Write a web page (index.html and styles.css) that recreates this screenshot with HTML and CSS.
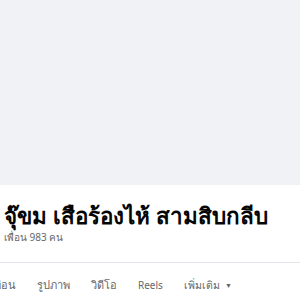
FILE: index.html
```html
<!DOCTYPE html>
<html lang="th">
<head>
    <meta charset="UTF-8">
    <meta name="viewport" content="width=device-width, initial-scale=1.0">
    <title>จุ๊ขม เสือร้องไห้ สามสิบกลีบ</title>
    <link rel="stylesheet" href="styles.css">
</head>
<body>

    <div class="cover"></div>

    <div class="profile">
        <div class="profile-info">
            <h1 class="profile-name">จุ๊ขม เสือร้องไห้ สามสิบกลีบ</h1>
            <div class="friend-count">เพื่อน 983 คน</div>
        </div>

        <nav class="tabs">
            <a class="tab" href="#">เพื่อน</a>
            <a class="tab" href="#">รูปภาพ</a>
            <a class="tab" href="#">วิดีโอ</a>
            <a class="tab tab-latin" href="#">Reels</a>
            <a class="tab tab-more" href="#">เพิ่มเติม<span class="caret">&#9660;</span></a>
        </nav>
    </div>

</body>
</html>
```

FILE: styles.css
```css
:root {
    --page-bg: #f0f2f5;
    --card-bg: #ffffff;
    --text-color: #050505;
    --muted-color: #65676b;
    --divider-color: #e4e6eb;
}

body {
    margin: 0;
    font-family: "Noto Sans", "Liberation Sans", sans-serif;
    background: var(--card-bg);
    overflow: hidden;
}

/* Cover area */
.cover {
    height: 185px;
    background: var(--page-bg);
}

/* Name and friends */
.profile-info {
    padding: 17px 4px 18px;
    border-bottom: 1px solid var(--divider-color);
}

.profile-name {
    margin: 0;
    color: var(--text-color);
    font-size: 22.4px;
    font-weight: 700;
    line-height: 28px;
    white-space: nowrap;
}

.friend-count {
    color: var(--muted-color);
    font-size: 10px;
    line-height: 14px;
}

/* Tab row */
.tabs {
    display: flex;
    align-items: baseline;
    gap: 21px;
    margin-left: -10px;
    padding-top: 14px;
}

.tab {
    color: var(--muted-color);
    font-size: 11px;
    line-height: 16px;
    text-decoration: none;
    white-space: nowrap;
}

.tab-latin {
    font-size: 10px;
}

.tab-more {
    font-size: 10.5px;
}

.caret {
    font-size: 7px;
    vertical-align: 1px;
    margin-left: 5px;
}
```
